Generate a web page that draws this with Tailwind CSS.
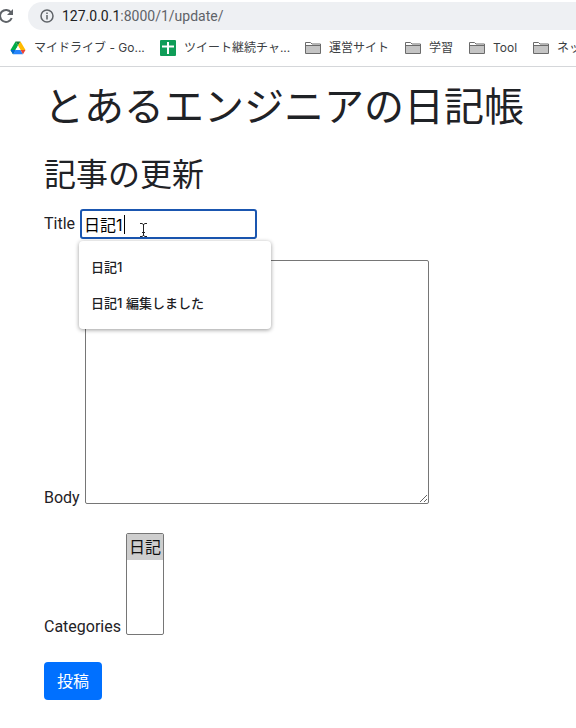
<!DOCTYPE html>
<html lang="ja">

<head>
    <meta charset="UTF-8">
    <meta name="viewport" content="width=device-width, initial-scale=1.0">
    <title>記事の更新</title>
    <script src="https://cdn.jsdelivr.net/npm/@tailwindcss/browser@4"></script>
</head>

<body class="bg-white text-[#1f2226] font-['Inter','Noto_Sans_CJK_JP',sans-serif] overflow-x-hidden">
    <!-- フォルダアイコン -->
    <svg class="hidden">
        <symbol id="folder" viewBox="0 0 16 14">
            <path d="M.5 12.5v-11h5l1.5 1.5h8.5v9.5z" fill="#fff" stroke="#6b6b6b" />
            <path d="M1 5h14v7H1z" fill="#c4c4c4" />
            <path d="M.5 4.5h15" stroke="#6b6b6b" />
        </symbol>
    </svg>

    <!-- ブラウザのツールバー -->
    <header class="border-b border-[#d5d7da] overflow-hidden">
        <div class="flex items-center pt-[2px]">
            <button type="button" aria-label="再読み込み" class="w-7 shrink-0">
                <svg class="w-4 h-4 -ml-[2px]" viewBox="0 0 16 16" fill="none" stroke="#5f6368" stroke-width="2">
                    <path d="M13 4.5A6 6 0 1 0 13.7 10" />
                    <path d="M15 1v6H9z" fill="#5f6368" stroke="none" />
                </svg>
            </button>
            <div class="flex items-center grow h-7 rounded-l-full bg-[#eef0f3] pl-3">
                <svg class="w-[14px] h-[14px] mr-2 shrink-0" viewBox="0 0 14 14" fill="none" stroke="#5f6368" stroke-width="1.5">
                    <circle cx="7" cy="7" r="6" />
                    <path d="M7 6v4.5M7 3.5V5" />
                </svg>
                <span class="text-sm font-['Roboto',sans-serif] text-[#5f6368]"><span class="text-[#202124]">127.0.0.1</span>:8000/1/update/</span>
            </div>
        </div>
        <nav class="flex items-center h-9 pl-[10px] text-xs text-[#3c4043] whitespace-nowrap">
            <a href="#" class="flex items-center w-[150px] shrink-0">
                <svg class="w-4 h-4 mr-2" viewBox="0 0 16 16">
                    <path d="M5.5 1.5h5L8 5.8z" fill="#188038" />
                    <path d="M5.5 1.5 8 5.8 3 14.2.5 10z" fill="#00ac47" />
                    <path d="M10.5 1.5 15.5 10h-5L8 5.8z" fill="#ffba00" />
                    <path d="M5.5 10h5L13 14.2H3z" fill="#2684fc" />
                    <path d="M.5 10h5L3 14.2z" fill="#0066da" />
                    <path d="M10.5 10h5L13 14.2z" fill="#ea4335" />
                    <path d="M8 5.8 10.5 10h-5z" fill="#fff" />
                </svg>
                マイドライブ - Go...
            </a>
            <a href="#" class="flex items-center w-[145px] shrink-0">
                <svg class="w-4 h-4 mr-2" viewBox="0 0 16 16">
                    <rect width="16" height="16" rx="1" fill="#0f9d58" />
                    <path d="M8 2v12M2 6.5h12" stroke="#fff" stroke-width="2" />
                </svg>
                ツイート継続チャ...
            </a>
            <a href="#" class="flex items-center w-[100px] shrink-0">
                <svg class="w-4 h-[14px] mr-2"><use href="#folder" /></svg>運営サイト
            </a>
            <a href="#" class="flex items-center w-16 shrink-0">
                <svg class="w-4 h-[14px] mr-2"><use href="#folder" /></svg>学習
            </a>
            <a href="#" class="flex items-center w-16 shrink-0">
                <svg class="w-4 h-[14px] mr-2"><use href="#folder" /></svg>Tool
            </a>
            <a href="#" class="flex items-center shrink-0">
                <svg class="w-4 h-[14px] mr-2"><use href="#folder" /></svg>ネット
            </a>
        </nav>
    </header>

    <main class="px-11 pt-4">
        <h1 class="text-[40px] leading-12 font-normal whitespace-nowrap">とあるエンジニアの日記帳</h1>
        <h2 class="mt-6 text-[32px] leading-10 font-normal">記事の更新</h2>

        <form>
            <div class="mt-[14px] flex items-center">
                <label for="title" class="mr-[5px] font-['Roboto',sans-serif]">Title</label>
                <div class="relative">
                    <input id="title" type="text" value="日記1" autocomplete="off"
                        class="block w-[177px] h-[30px] px-[2px] border-2 border-[#1a56b0] rounded-[3px] text-black caret-transparent outline-none">
                    <!-- キャレット -->
                    <span class="absolute left-11 top-[6px] w-px h-[19px] bg-black"></span>
                    <!-- マウスカーソル -->
                    <svg class="absolute left-[59px] top-[13px] w-[9px] h-4" viewBox="0 0 9 16" fill="none" stroke="#222">
                        <path d="M1 1.5h2l1.5 1L6 1.5h2M4.5 2v12M1 14.5h2l1.5-1 1.5 1h2M3 10.5h3" />
                    </svg>
                    <!-- 入力候補 -->
                    <ul class="absolute z-10 top-8 -left-px w-[192px] py-2 bg-white rounded-sm shadow-[0_1px_4px_rgba(0,0,0,0.4)] text-[13px] leading-9 text-[#202124] font-medium">
                        <li class="px-3">日記1</li>
                        <li class="px-3">日記1 編集しました</li>
                    </ul>
                </div>
            </div>

            <div class="mt-[21px] flex items-end">
                <label for="body" class="mr-[5px] -mb-[6px] font-['Roboto',sans-serif]">Body</label>
                <textarea id="body" class="w-[344px] h-[244px] border border-[#767676] rounded-xs"></textarea>
            </div>

            <div class="mt-[29px] flex items-end">
                <label for="categories" class="mr-[5px] -mb-1 font-['Roboto',sans-serif]">Categories</label>
                <select id="categories" multiple size="4" class="w-[38px] h-[102px] border border-[#767676] rounded-xs overflow-hidden text-black">
                    <option selected class="px-[2px] pb-[2px]">日記</option>
                </select>
            </div>

            <button type="submit" class="mt-[27px] h-[38px] px-[13px] rounded-sm bg-[#0070ff] text-white">投稿</button>
        </form>
    </main>
</body>

</html>
